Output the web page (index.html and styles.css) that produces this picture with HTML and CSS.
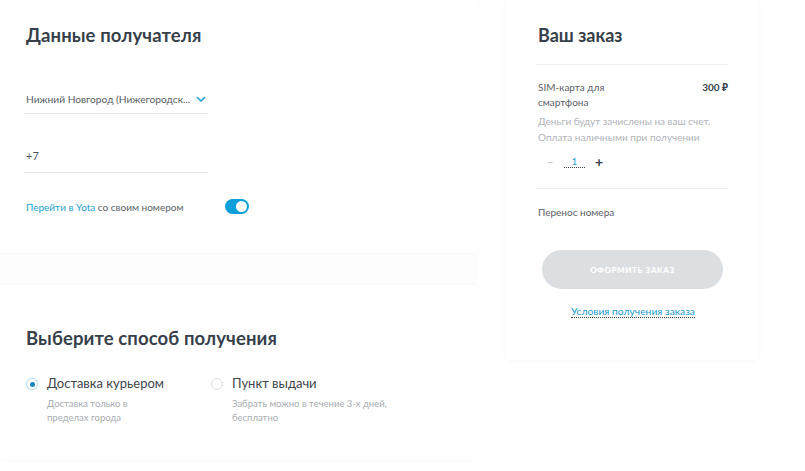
FILE: index.html
```html
<!DOCTYPE html>
<html lang="ru">
<head>
<meta charset="utf-8">
<link rel="stylesheet" href="styles.css">
</head>
<body>
<div class="page">
  <div class="left">
    <section class="card card-recipient">
      <h2 class="title">Данные получателя</h2>
      <div class="field field-select">
        <span class="field-text">Нижний Новгород (Нижегородск...</span>
        <svg class="chevron" width="10" height="7" viewBox="0 0 10 7"><path d="M1 1.2 L5 5 L9 1.2" fill="none" stroke="#1fa3d6" stroke-width="1.6"/></svg>
      </div>
      <div class="field field-phone">
        <span class="field-text">+7</span>
      </div>
      <div class="switch-row">
        <span class="switch-label"><span class="link">Перейти в Yota</span> со своим номером</span>
        <span class="toggle"><span class="knob"></span></span>
      </div>
    </section>
    <section class="card card-delivery">
      <h2 class="title">Выберите способ получения</h2>
      <div class="options">
        <div class="option">
          <span class="radio checked"><span class="dot"></span></span>
          <div class="option-body">
            <div class="option-title">Доставка курьером</div>
            <div class="option-sub">Доставка только в<br>пределах города</div>
          </div>
        </div>
        <div class="option">
          <span class="radio"></span>
          <div class="option-body">
            <div class="option-title">Пункт выдачи</div>
            <div class="option-sub">Забрать можно в течение 3-х дней,<br>бесплатно</div>
          </div>
        </div>
      </div>
    </section>
  </div>
  <aside class="card order">
    <h2 class="order-title">Ваш заказ</h2>
    <div class="order-item">
      <div class="item-row">
        <span class="item-name">SIM-карта для<br>смартфона</span>
        <span class="item-price">300 ₽</span>
      </div>
      <div class="item-note">Деньги будут зачислены на ваш счет.<br>Оплата наличными при получении</div>
      <div class="qty">
        <span class="qty-btn minus">−</span>
        <span class="qty-val">1</span>
        <span class="qty-btn plus">+</span>
      </div>
    </div>
    <div class="order-extra">Перенос номера</div>
    <button class="submit">ОФОРМИТЬ ЗАКАЗ</button>
    <div class="terms"><span class="terms-link">Условия получения заказа</span></div>
  </aside>
</div>
</body>
</html>
```

FILE: styles.css
```css
* { box-sizing: border-box; }
html, body { margin: 0; padding: 0; background: #ffffff; }
body {
  font-family: "Lato", "Noto Sans", sans-serif;
  color: #3b4350;
  width: 805px;
  height: 471px;
  overflow: hidden;
}
.page {
  display: grid;
  grid-template-columns: 477px 252px;
  column-gap: 29px;
  align-items: start;
}
.left {
  display: flex;
  flex-direction: column;
  gap: 32px;
  background: #fdfdfd;
}
.card {
  background: #fff;
  box-shadow: 0 0 4px rgba(0,0,0,0.03);
}
.card-recipient {
  height: 253px;
  padding: 22px 0 0 26px;
}
.title {
  margin: 0;
  font-size: 18.5px;
  font-weight: 700;
  color: #373f4a;
  letter-spacing: 0.1px;
  line-height: 26px;
}
.field {
  width: 184px;
  margin-left: -2px;
  padding-left: 2px;
  border-bottom: 1px solid #e3e5e8;
  display: flex;
  align-items: center;
  justify-content: space-between;
  font-size: 11px;
  color: #555a62;
  white-space: nowrap;
}
.field-select .field-text { font-size: 10.2px; overflow: hidden; min-width: 0; }
.field-select { margin-top: 41px; height: 25px; padding-bottom: 4px; }
.field-select .chevron { margin-right: 2px; flex: none; }
.field-phone { margin-top: 33px; height: 26px; padding-bottom: 9px; }
.switch-row {
  margin-top: 26px;
  width: 223px;
  display: flex;
  align-items: center;
  justify-content: space-between;
  font-size: 10px;
  color: #5a5f66;
}
.link { color: #1ea1d3; }
.toggle {
  width: 24px;
  height: 15px;
  border-radius: 8px;
  background: #0d9fd9;
  display: flex;
  align-items: center;
  justify-content: flex-end;
  padding-right: 2px;
}
.knob {
  width: 11px;
  height: 11px;
  border-radius: 50%;
  background: #fff;
}
.card-delivery {
  height: 175px;
  padding: 40px 0 0 26px;
}
.card-delivery .title { font-size: 18.5px; }
.options {
  display: flex;
  margin-top: 24px;
}
.option { display: flex; gap: 9px; }
.option:first-child { width: 185px; }
.radio {
  margin-top: 3px;
  width: 12px;
  height: 12px;
  border-radius: 50%;
  border: 1px solid #d9dde1;
  display: flex;
  align-items: center;
  justify-content: center;
  flex: none;
}
.radio.checked { border-color: #b6e1f1; box-shadow: 0 0 2px rgba(30,160,210,0.25); }
.dot { width: 5px; height: 5px; border-radius: 50%; background: #1a86b5; }
.option-title { font-size: 13px; color: #3e444c; line-height: 17px; }
.option-sub { font-size: 9.5px; color: #a8acb0; line-height: 14px; margin-top: 5px; }
.order {
  height: 360px;
  padding: 24px 30px 0 30px;
  box-shadow: 0 0 6px rgba(0,0,0,0.045);
}
.order-title {
  margin: 0 0 0 2px;
  font-size: 18px;
  font-weight: 700;
  color: #373f4a;
  line-height: 22px;
}
.order-item {
  margin-top: 18px;
  border-top: 1px solid #eeeff1;
  border-bottom: 1px solid #eeeff1;
  padding: 15px 0 20px 2px;
}
.item-row {
  display: flex;
  justify-content: space-between;
  font-size: 10px;
  line-height: 15px;
  color: #5b6068;
}
.item-price { font-weight: 700; color: #373f4a; }
.item-note { font-size: 10px; line-height: 16px; color: #b0b3b7; margin-top: 3px; }
.qty {
  display: flex;
  align-items: center;
  margin-top: 10px;
  height: 13px;
  font-size: 12px;
}
.qty-btn { width: 20px; text-align: center; color: #3a4049; }
.plus { font-size: 14px; font-weight: 700; }
.minus { color: #c5c8cc; margin-left: 2px; }
.qty-val {
  width: 21px;
  margin-left: 4px;
  margin-right: 4px;
  text-align: center;
  font-size: 10px;
  color: #28a0cf;
  border-bottom: 1px dotted #3b4350;
  line-height: 11px;
}
.order-extra { font-size: 10px; color: #5b6068; margin: 17px 0 0 2px; }
.submit {
  display: block;
  margin: 32px 0 0 6px;
  width: 181px;
  height: 39px;
  border: none;
  border-radius: 20px;
  background: #dcdfe2;
  color: #fff;
  font-family: inherit;
  font-size: 8px;
  font-weight: 900;
  letter-spacing: 0.6px;
}
.terms { text-align: center; margin-top: 16px; font-size: 10.3px; padding-left: 2px; }
.terms-link { color: #1a9bce; border-bottom: 1px dotted #3b4350; }
```
